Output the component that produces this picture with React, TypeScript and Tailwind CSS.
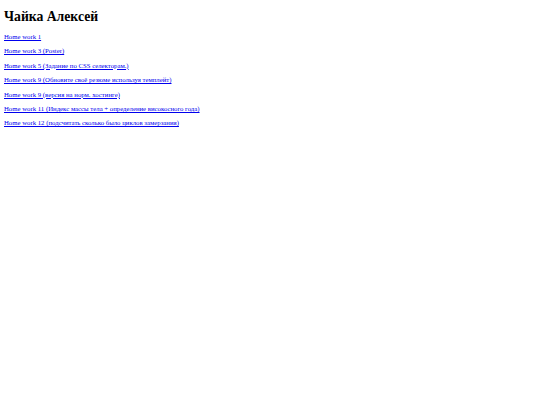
const links = [
  "Home work 1",
  "Home work 3 (Poster)",
  "Home work 5 (Задание по CSS селекторам.)",
  "Home work 9 (Обновите своё резюме используя темплейт)",
  "Home work 9 (версия на норм. хостинге)",
  "Home work 11 (Индекс массы тела + определение високосного года)",
  "Home work 12 (подсчитать сколько было циклов замерзания)",
];

export default function App() {
  return (
    <div className="min-h-[405px] bg-white px-[4px] pt-[7.5px] font-['Liberation_Serif',serif] text-black">
      <h1 className="text-[13.7px] font-bold leading-[18px]">Чайка Алексей</h1>
      <div className="mt-[7.5px] flex flex-col gap-[6.6px]">
        {links.map((text) => (
          <p key={text} className="text-[6.75px] leading-[7.8px]">
            <a href="#" className="text-[#0000ee] underline">
              {text}
            </a>
          </p>
        ))}
      </div>
    </div>
  );
}
